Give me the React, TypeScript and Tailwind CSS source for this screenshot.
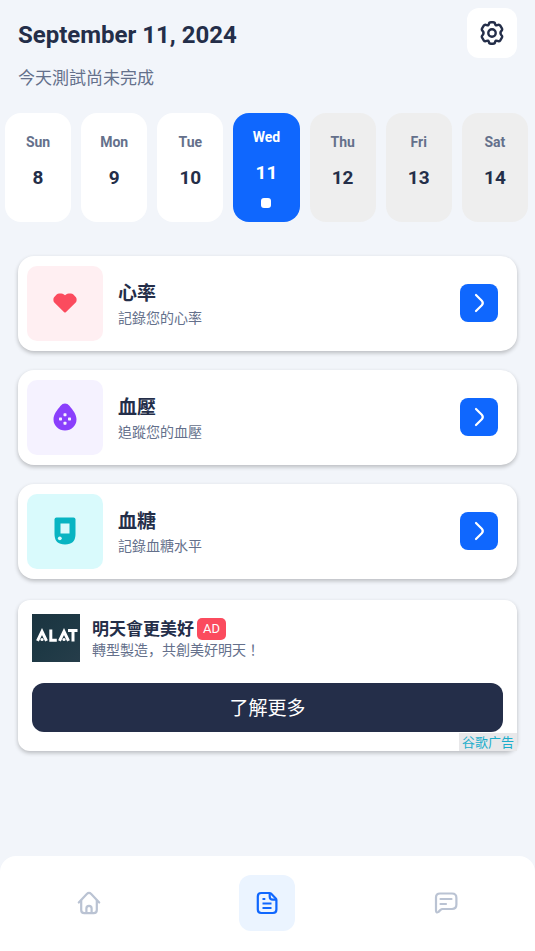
import type { ReactNode } from "react";
import clsx from "clsx";

type DayState = "past" | "today" | "future";

interface Day {
  name: string;
  date: number;
  state: DayState;
}

interface Measurement {
  title: string;
  description: string;
  tileClass: string;
  icon: ReactNode;
}

const days: Day[] = [
  { name: "Sun", date: 8, state: "past" },
  { name: "Mon", date: 9, state: "past" },
  { name: "Tue", date: 10, state: "past" },
  { name: "Wed", date: 11, state: "today" },
  { name: "Thu", date: 12, state: "future" },
  { name: "Fri", date: 13, state: "future" },
  { name: "Sat", date: 14, state: "future" }
];

const measurements: Measurement[] = [
  { title: "心率", description: "記錄您的心率", tileClass: "bg-[#ffeff2]", icon: <HeartIcon /> },
  { title: "血壓", description: "追蹤您的血壓", tileClass: "bg-[#f5f2ff]", icon: <DropIcon /> },
  { title: "血糖", description: "記錄血糖水平", tileClass: "bg-[#d9fafc]", icon: <GlucoseIcon /> }
];

export default function App() {
  return (
    <div className="flex min-h-screen flex-col bg-[#f2f5fa] font-[Roboto,'Noto_Sans_CJK_TC',sans-serif] text-[#242e49]">
      <header className="px-[18px] pt-2">
        <div className="flex items-center justify-between">
          <h1 className="pt-1 text-2xl font-bold">September 11, 2024</h1>
          <button type="button" aria-label="設定" className="flex size-[50px] items-center justify-center rounded-xl bg-white">
            <SettingsIcon />
          </button>
        </div>
        <p className="mt-2 text-[17px] leading-6 text-[#64708b]">今天測試尚未完成</p>
      </header>

      <WeekStrip />

      <main className="mt-[34px] flex flex-col px-[18px] pb-6">
        <div className="flex flex-col gap-[19px]">
          {measurements.map((item) => (
            <MeasurementCard key={item.title} {...item} />
          ))}
        </div>
        <AdCard />
      </main>

      <BottomNav />
    </div>
  );
}

function WeekStrip() {
  return (
    <div className="mt-[23px] grid grid-cols-7 gap-[10px] pr-[7px] pl-[5px]">
      {days.map(({ name, date, state }) => (
        <button
          key={name}
          type="button"
          className={clsx(
            "flex h-[109px] flex-col items-center rounded-2xl",
            state === "past" && "bg-white pt-[19px]",
            state === "today" && "bg-[#0f67fe] pt-[14px] text-white",
            state === "future" && "bg-[#eeeeee] pt-[19px]"
          )}
        >
          <span className={clsx("text-sm font-bold", state !== "today" && "text-[#64708b]")}>{name}</span>
          <span className="mt-[14px] text-[19px] leading-6 font-bold">{date}</span>
          {state === "today" && <span className="mt-[13px] size-[10px] rounded-[3px] bg-white" />}
        </button>
      ))}
    </div>
  );
}

function MeasurementCard({ title, description, tileClass, icon }: Measurement) {
  return (
    <section className="flex h-[95px] items-center rounded-2xl bg-white pr-[19px] pb-px pl-[9px] shadow-[0_2px_4px_rgba(0,0,0,0.24)]">
      <div className={clsx("flex h-[75px] w-[76px] items-center justify-center rounded-[10px]", tileClass)}>{icon}</div>
      <div className="ml-[15px] flex-1 pt-px">
        <h2 className="text-[19px] leading-7 font-bold">{title}</h2>
        <p className="text-sm leading-5 text-[#64708b]">{description}</p>
      </div>
      <button type="button" aria-label={title} className="flex size-[38px] items-center justify-center rounded-lg bg-[#0f67fe]">
        <ChevronIcon />
      </button>
    </section>
  );
}

function AdCard() {
  return (
    <section className="mt-[21px] rounded-xl bg-white shadow-[0_2px_4px_rgba(0,0,0,0.24)]">
      <div className="flex gap-3 px-[14px] pt-[14px]">
        <AlatLogo />
        <div className="pt-[3px]">
          <div className="flex items-center gap-[3px]">
            <h2 className="text-[17px] leading-6 font-bold">明天會更美好</h2>
            <span className="rounded-[5px] bg-[#fb4b5e] px-[6px] text-[13px] leading-[22px] text-white">AD</span>
          </div>
          <p className="font-['Noto_Sans_CJK_JP',sans-serif] text-sm leading-4 text-[#64708b]">
            轉型製造，共創美好明天！
          </p>
        </div>
      </div>
      <div className="mt-[21px] px-[14px]">
        <button type="button" className="h-[49px] w-full rounded-xl bg-[#242e49] pt-[3px] text-[19px] text-white">
          了解更多
        </button>
      </div>
      <div className="mt-px flex justify-end">
        <span className="bg-[#e8e8ea] px-[3px] font-['Noto_Sans_CJK_SC',sans-serif] text-[13px] leading-[18px] text-[#1badcb]">
          谷歌广告
        </span>
      </div>
    </section>
  );
}

function BottomNav() {
  return (
    <nav className="mt-auto grid h-[95px] grid-cols-3 justify-items-center rounded-t-2xl bg-white pt-[19px]">
      <button type="button" aria-label="首頁" className="flex size-14 items-center justify-center">
        <HomeIcon />
      </button>
      <button type="button" aria-label="紀錄" aria-current="page" className="flex size-14 items-center justify-center rounded-xl bg-[#ebf4ff]">
        <DocumentIcon />
      </button>
      <button type="button" aria-label="訊息" className="flex size-14 items-center justify-center">
        <ChatIcon />
      </button>
    </nav>
  );
}

function SettingsIcon() {
  return (
    <svg width="26" height="26" viewBox="0 0 26 26" fill="none" stroke="#242e49" strokeWidth="2.4" strokeLinejoin="round">
      <path d="M9.8 4.4Q10 2.2 12 2.2h2Q16 2.2 16.2 4.4Q16.6 5.8 18.2 5.2Q20.2 4.1 21.4 5.8L22.9 8.3Q23.7 10 22.2 11.1Q20.7 13 22.2 14.9Q23.7 16 22.9 17.7L21.4 20.2Q20.2 21.9 18.2 20.8Q16.6 20.2 16.2 21.6Q16 23.8 14 23.8h-2Q10 23.8 9.8 21.6Q9.4 20.2 7.8 20.8Q5.8 21.9 4.6 20.2L3.1 17.7Q2.3 16 3.8 14.9Q5.3 13 3.8 11.1Q2.3 10 3.1 8.3L4.6 5.8Q5.8 4.1 7.8 5.2Q9.4 5.8 9.8 4.4Z" />
      <circle cx="13" cy="13" r="3.7" />
    </svg>
  );
}

function HeartIcon() {
  return (
    <svg width="24" height="20" viewBox="0 0 24 20" fill="#fb4b5e">
      <path d="M12 2.2 10.6 1.2Q9.6.4 8.3.4H6.1Q4.8.4 3.9 1.3L1.3 4Q.4 4.9.4 6.2V7.2Q.4 8.5 1.3 9.4L11.2 19.2Q12 20 12.8 19.2L22.7 9.4Q23.6 8.5 23.6 7.2V6.2Q23.6 4.9 22.7 4L20.1 1.3Q19.2.4 17.9.4H15.7Q14.4.4 13.4 1.2Z" />
    </svg>
  );
}

function DropIcon() {
  return (
    <svg width="24" height="28" viewBox="0 0 24 28">
      <path d="M12 .6Q9.4.6 7.6 2.8C4 7.2.5 11.4.5 16.2A11.5 11.3 0 0 0 23.5 16.2C23.5 11.4 20 7.2 16.4 2.8Q14.6.6 12 .6Z" fill="#8a3ffc" />
      <g fill="#f5f2ff">
        <rect x="10.5" y="10.2" width="3" height="3" rx=".7" />
        <rect x="6" y="14.5" width="3" height="3" rx=".7" />
        <rect x="15" y="14.5" width="3" height="3" rx=".7" />
        <rect x="10.5" y="18.8" width="3" height="3" rx=".7" />
      </g>
    </svg>
  );
}

function GlucoseIcon() {
  return (
    <svg width="22" height="28" viewBox="0 0 22 28">
      <path d="M2.5.5h17Q21.5.5 21.5 2.5V17Q21.5 27.5 11 27.5T.5 17V2.5Q.5.5 2.5.5Z" fill="#08b4c2" />
      <rect x="6.5" y="6.5" width="9" height="10" fill="#d9fafc" />
      <circle cx="5.8" cy="21.3" r="1.9" fill="#d9fafc" />
    </svg>
  );
}

function ChevronIcon() {
  return (
    <svg width="24" height="24" viewBox="0 0 24 24" fill="none" stroke="#fff" strokeWidth="2.2" strokeLinecap="round" strokeLinejoin="round">
      <path d="M9 4 14.8 9.8Q16.8 12 14.8 14.3L9 20" />
    </svg>
  );
}

function AlatLogo() {
  return (
    <svg role="img" aria-label="ALAT" width="48" height="48" viewBox="0 0 48 48" className="shrink-0">
      <defs>
        <linearGradient id="alat-bg" x1="0" y1="0" x2="1" y2="1">
          <stop offset="0" stopColor="#1b3440" />
          <stop offset="0.5" stopColor="#1e3945" />
          <stop offset="1" stopColor="#263d4a" />
        </linearGradient>
      </defs>
      <rect width="48" height="48" fill="url(#alat-bg)" />
      {/* wordmark strokes, with a dot in place of each crossbar */}
      <g fill="none" stroke="#fff" strokeWidth="3">
        <path d="M5.5 26.8 10 17.5l4.500 9.3" />
        <path d="M18.8 15.5v10.8h6" />
        <path d="M27.5 26.8 32 17.5l4.500 9.3" />
        <path d="M36 16.5h9.5M41 16v11.5" />
      </g>
      <g fill="#fff">
        <circle cx="10" cy="25.5" r="1.6" />
        <circle cx="32" cy="25.5" r="1.6" />
      </g>
    </svg>
  );
}

function HomeIcon() {
  return (
    <svg width="24" height="24" viewBox="0 0 24 24" fill="none" stroke="#bac3d3" strokeWidth="2.2" strokeLinecap="round" strokeLinejoin="round">
      <path d="M1.8 11.5 9.8 3Q12 .8 14.2 3l8 8.5" />
      <path d="M4.2 9.5V19Q4.2 22.2 7.4 22.2h9.2Q19.8 22.2 19.8 19V9.5" />
      <path d="M9.4 22v-4.6a2.6 2.6 0 0 1 5.2 0V22" />
    </svg>
  );
}

function DocumentIcon() {
  return (
    <svg width="24" height="24" viewBox="0 0 24 24" fill="none" stroke="#0f67fe" strokeWidth="2.2" strokeLinejoin="round">
      <path d="M14.5 2H6.2Q2.8 2 2.8 5.4v13.2Q2.8 22 6.2 22h11.8Q21.4 22 21.4 18.6V8.900Q21.4 8.1 20.8 7.5L16 2.6Q15.4 2 14.5 2Z" />
      <path d="M14.7 2.2v3.2Q14.7 8.7 18 8.7h3.2" />
      <path d="M7.5 8h2.8M7.5 12.5h9M7.5 17h9" />
    </svg>
  );
}

function ChatIcon() {
  return (
    <svg width="24" height="24" viewBox="0 0 24 24" fill="none" stroke="#bac3d3" strokeWidth="2.2" strokeLinejoin="round">
      <path d="M6 2.5h12Q22.4 2.5 22.4 6.9v6.7Q22.4 18 18 18H8.5Q7.3 18 6.5 18.9L4.5 20.9Q2 22.5 2 19.5V6.5Q2 2.5 6 2.5Z" />
      <path d="M6.5 8h11M6.5 13h5.5" strokeLinecap="round" />
    </svg>
  );
}
